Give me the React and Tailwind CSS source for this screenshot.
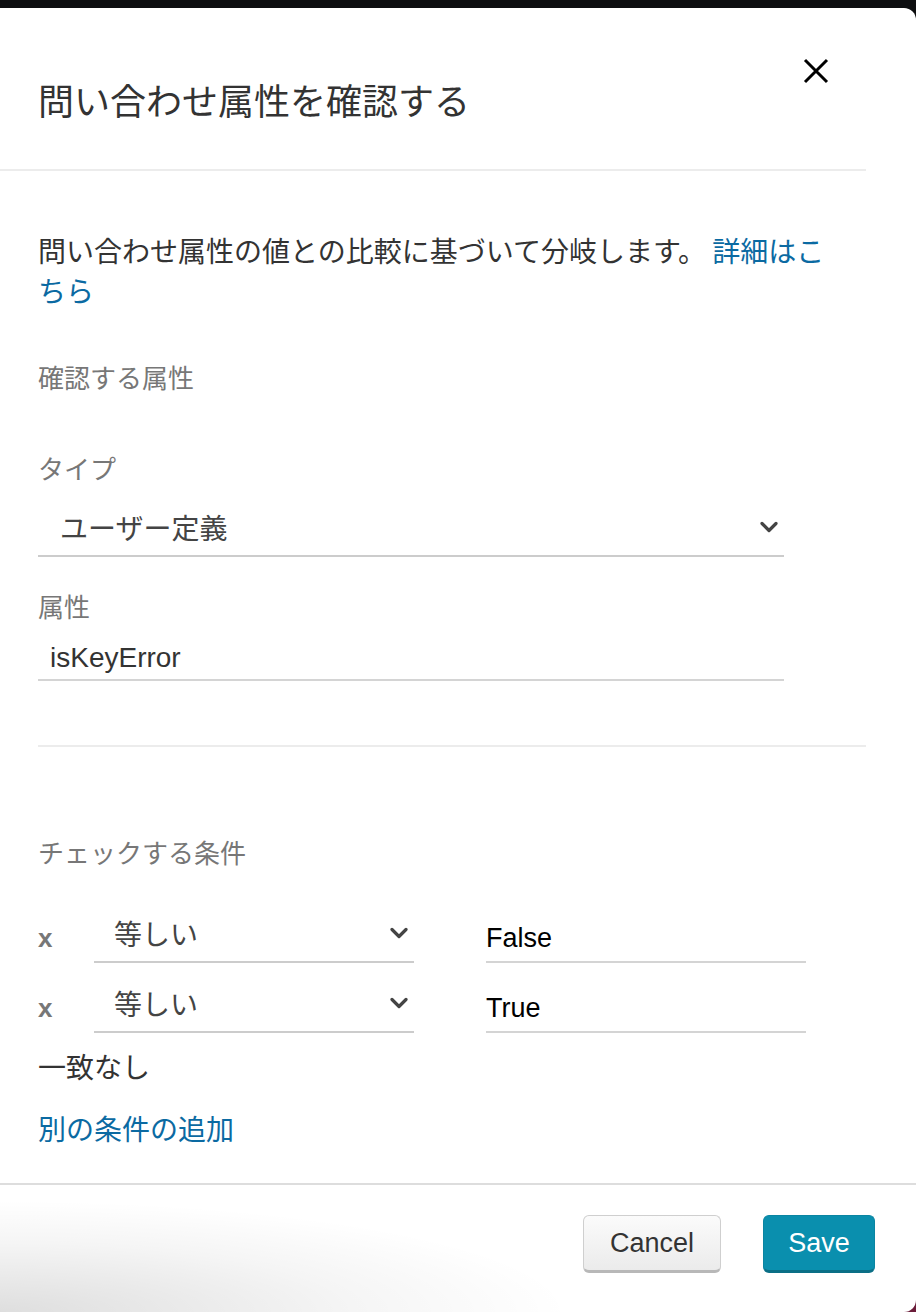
import React from "react";

const CJK = { fontFamily: '"Noto Sans CJK JP", "Noto Sans", sans-serif' };
const LAT = { fontFamily: '"Liberation Sans", Arial, "Noto Sans CJK JP", sans-serif' };

function Chevron({ className = "" }) {
  return (
    <svg width="18" height="12" viewBox="0 0 18 12" className={className}>
      <polyline points="2,2.5 9,9.5 16,2.5" fill="none" stroke="#444" strokeWidth="3.2" strokeLinecap="round" strokeLinejoin="round" />
    </svg>
  );
}

function CondRow({ value, mt }) {
  return (
    <div className={`flex items-end ${mt}`}>
      <div className="w-[56px] pb-[5px] text-[26px] font-bold leading-[40px] text-[#777]" style={LAT}>x</div>
      <div className="flex w-[320px] items-center justify-between border-b-2 border-[#cccccc] pb-[8px] pl-[20px] pr-[6px]">
        <span className="text-[28px] leading-[40px] text-[#444]" style={CJK}>等しい</span>
        <Chevron />
      </div>
      <div className="ml-[72px] w-[320px] border-b-2 border-[#d4d4d4] pb-[3px]">
        <span className="text-[27px] leading-[40px] text-black" style={LAT}>{value}</span>
      </div>
    </div>
  );
}

export default function App() {
  return (
    <div className="relative h-[1312px] w-[916px] overflow-hidden bg-[#0d0e10]">
      <div className="absolute bottom-0 right-0 h-[40px] w-[40px] bg-[#6b1d3a]" />
      <div className="relative mt-[8px] h-[1304px] w-[916px] overflow-hidden rounded-tr-[12px] rounded-br-[12px] bg-white">
        <div className="pointer-events-none absolute bottom-0 left-0 h-[110px] w-[560px] bg-[radial-gradient(ellipse_at_bottom_left,rgba(0,0,0,0.13),rgba(0,0,0,0.04)_45%,transparent_72%)]" />

        {/* Header */}
        <div className="relative">
          <div className="pl-[38px] pt-[71px] pb-[50px]">
            <h1 className="text-[36px] font-normal leading-[40px] text-[#333]" style={CJK}>問い合わせ属性を確認する</h1>
          </div>
          <button className="absolute left-[801px] top-[48px] p-[2px]" aria-label="close">
            <svg width="26" height="26" viewBox="0 0 26 26">
              <path d="M2 2 L24 24 M24 2 L2 24" stroke="#000" strokeWidth="3" fill="none" />
            </svg>
          </button>
          <div className="h-[2px] w-[866px] bg-[#ececec]" />
        </div>

        {/* Body */}
        <div className="pl-[38px]">
          <p className="mt-[59px] w-[800px] text-[28px] leading-[40px] text-[#333]" style={CJK}>
            問い合わせ属性の値との比較に基づいて分岐します。 <span className="text-[#0b6aa2]">詳細はこちら</span>
          </p>

          <div className="mt-[49px] text-[26px] leading-[36px] text-[#777]" style={CJK}>確認する属性</div>

          <div className="mt-[55px] text-[26px] leading-[36px] text-[#777]" style={CJK}>タイプ</div>
          <div className="mt-[21px] flex w-[746px] items-center justify-between border-b-2 border-[#cccccc] pb-[8px] pl-[22px] pr-[6px]">
            <span className="text-[28px] leading-[40px] text-[#444]" style={CJK}>ユーザー定義</span>
            <Chevron />
          </div>

          <div className="mt-[31px] text-[26px] leading-[36px] text-[#777]" style={CJK}>属性</div>
          <div className="mt-[14px] w-[746px] border-b-2 border-[#d4d4d4] pb-[1px] pl-[12px]">
            <span className="text-[28px] leading-[40px] text-[#333]" style={LAT}>isKeyError</span>
          </div>

          <div className="mt-[64px] h-[2px] w-[828px] bg-[#ececec]" />

          <div className="mt-[87px] text-[26px] leading-[36px] text-[#777]" style={CJK}>チェックする条件</div>

          <CondRow value="False" mt="mt-[43px]" />
          <CondRow value="True" mt="mt-[20px]" />

          <div className="mt-[13px] text-[28px] leading-[40px] text-[#333]" style={CJK}>一致なし</div>
          <div className="mt-[22px] text-[28px] leading-[40px] text-[#0b6aa2]" style={CJK}>別の条件の追加</div>
        </div>

        {/* Footer */}
        <div className="mt-[35px] h-[2px] w-full bg-[#dddddd]" />
        <div className="relative flex justify-end gap-[42px] pr-[41px] pt-[30px]">
          <button
            className="h-[58px] w-[138px] rounded-[6px] border border-[#cfcfcf] border-b-[3px] border-b-[#b8b8b8] bg-gradient-to-b from-[#fbfbfb] to-[#ebebeb] text-[27px] text-[#333]"
            style={LAT}
          >
            Cancel
          </button>
          <button
            className="h-[58px] w-[112px] rounded-[6px] border border-[#0a85a2] border-b-[3px] border-b-[#0b6f86] bg-[#0a8fae] text-[27px] text-white"
            style={LAT}
          >
            Save
          </button>
        </div>
      </div>
    </div>
  );
}
